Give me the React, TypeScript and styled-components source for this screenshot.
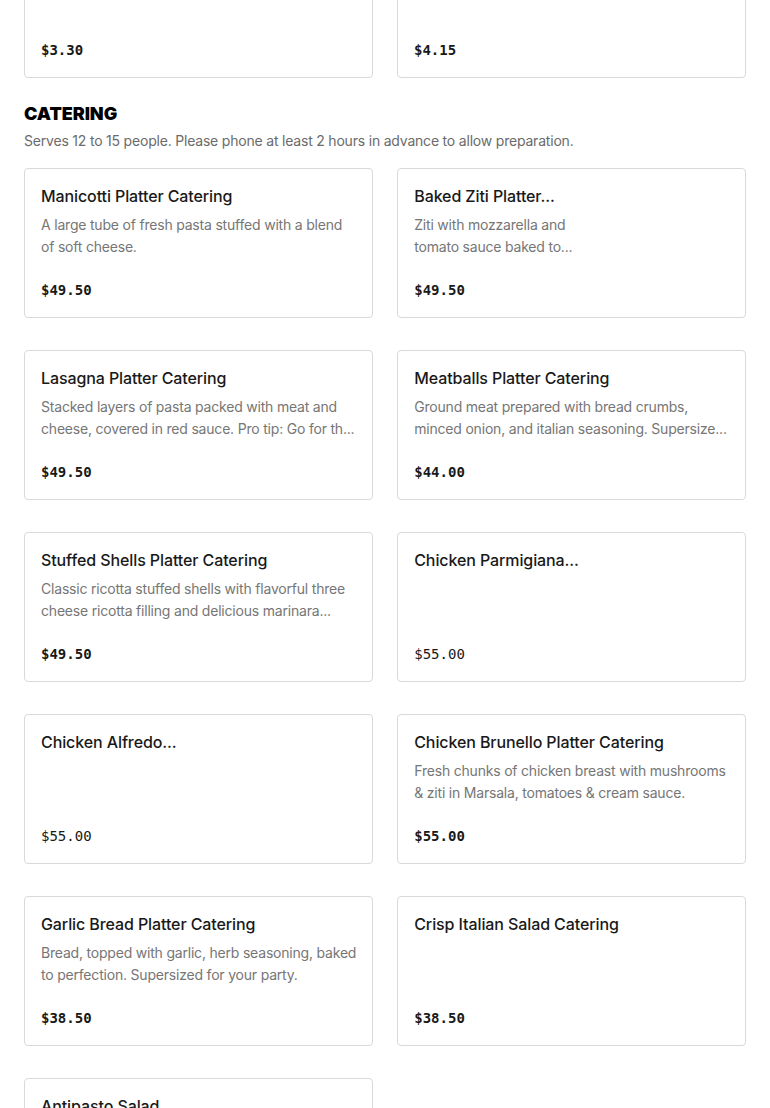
import React from "react";
import styled, { createGlobalStyle } from "styled-components";

const Global = createGlobalStyle`
  html, body { margin: 0; padding: 0; background: #fff; }
  body { font-family: Inter, "Noto Sans", sans-serif; color: #191919; overflow: hidden; }
`;

const Page = styled.main`
  padding: 0 24px;
  margin-top: -72px;
`;

const Section = styled.section`
  display: flex;
  flex-direction: column;
`;

const SectionHeader = styled.header`
  display: flex;
  flex-direction: column;
  gap: 5px;
  margin: 24px 0 17px;
`;

const SectionTitle = styled.h2`
  margin: 0;
  font-family: Inter, sans-serif;
  font-weight: 900;
  font-size: 18px;
  line-height: 24px;
  letter-spacing: -0.05px;
  color: #000;
`;

const SectionNote = styled.p`
  margin: 0;
  font-size: 14px;
  line-height: 20px;
  letter-spacing: -0.2px;
  color: #6b6b6b;
`;

const Grid = styled.div`
  display: grid;
  grid-template-columns: 1fr 1fr;
  column-gap: 24px;
  row-gap: 32px;
`;

const Card = styled.article`
  box-sizing: border-box;
  height: 150px;
  border: 1px solid #d9d9d9;
  border-radius: 4px;
  padding: 16px 16px 18px;
  display: flex;
  flex-direction: column;
  justify-content: space-between;
  background: #fff;
`;

const Text = styled.div`
  display: flex;
  flex-direction: column;
  gap: 7px;
`;

const Title = styled.h3`
  margin: 0;
  font-size: 16px;
  font-weight: 500;
  line-height: 22px;
  letter-spacing: -0.1px;
  color: #191919;
  white-space: nowrap;
`;

const Desc = styled.p`
  margin: 0;
  display: flex;
  flex-direction: column;
  font-size: 14px;
  line-height: 22px;
  letter-spacing: -0.2px;
  color: #767676;
`;

const DescLine = styled.span`
  white-space: nowrap;
`;

const Price = styled.span<{ $light?: boolean }>`
  font-family: "DejaVu Sans Mono", "Liberation Mono", monospace;
  font-size: 14px;
  line-height: 20px;
  font-weight: ${(p) => (p.$light ? 400 : 700)};
  color: #191919;
  transform: translateY(1px);
`;

type Item = { title?: string; desc?: string[]; price: string; light?: boolean };

const previous: Item[] = [{ price: "$3.30" }, { price: "$4.15" }];

const catering: Item[] = [
  { title: "Manicotti Platter Catering", desc: ["A large tube of fresh pasta stuffed with a blend", "of soft cheese."], price: "$49.50" },
  { title: "Baked Ziti Platter...", desc: ["Ziti with mozzarella and", "tomato sauce baked to..."], price: "$49.50" },
  { title: "Lasagna Platter Catering", desc: ["Stacked layers of pasta packed with meat and", "cheese, covered in red sauce. Pro tip: Go for th..."], price: "$49.50" },
  { title: "Meatballs Platter Catering", desc: ["Ground meat prepared with bread crumbs,", "minced onion, and italian seasoning. Supersize..."], price: "$44.00" },
  { title: "Stuffed Shells Platter Catering", desc: ["Classic ricotta stuffed shells with flavorful three", "cheese ricotta filling and delicious marinara..."], price: "$49.50" },
  { title: "Chicken Parmigiana...", price: "$55.00", light: true },
  { title: "Chicken Alfredo...", price: "$55.00", light: true },
  { title: "Chicken Brunello Platter Catering", desc: ["Fresh chunks of chicken breast with mushrooms", "& ziti in Marsala, tomatoes & cream sauce."], price: "$55.00" },
  { title: "Garlic Bread Platter Catering", desc: ["Bread, topped with garlic, herb seasoning, baked", "to perfection. Supersized for your party."], price: "$38.50" },
  { title: "Crisp Italian Salad Catering", price: "$38.50" },
  { title: "Antipasto Salad", desc: ["Fresh greens with salami, ham, provolone and", "olives."], price: "$38.50" },
];

function MenuCard({ item }: { item: Item }) {
  return (
    <Card>
      <Text>
        {item.title && <Title>{item.title}</Title>}
        {item.desc && (
          <Desc>
            {item.desc.map((l, i) => (
              <DescLine key={i}>{l}</DescLine>
            ))}
          </Desc>
        )}
      </Text>
      <Price $light={item.light}>{item.price}</Price>
    </Card>
  );
}

export default function App() {
  return (
    <>
      <Global />
      <Page>
        <Section>
          <Grid>
            {previous.map((it, i) => (
              <MenuCard key={i} item={it} />
            ))}
          </Grid>
        </Section>
        <Section>
          <SectionHeader>
            <SectionTitle>CATERING</SectionTitle>
            <SectionNote>Serves 12 to 15 people. Please phone at least 2 hours in advance to allow preparation.</SectionNote>
          </SectionHeader>
          <Grid>
            {catering.map((it, i) => (
              <MenuCard key={i} item={it} />
            ))}
          </Grid>
        </Section>
      </Page>
    </>
  );
}
